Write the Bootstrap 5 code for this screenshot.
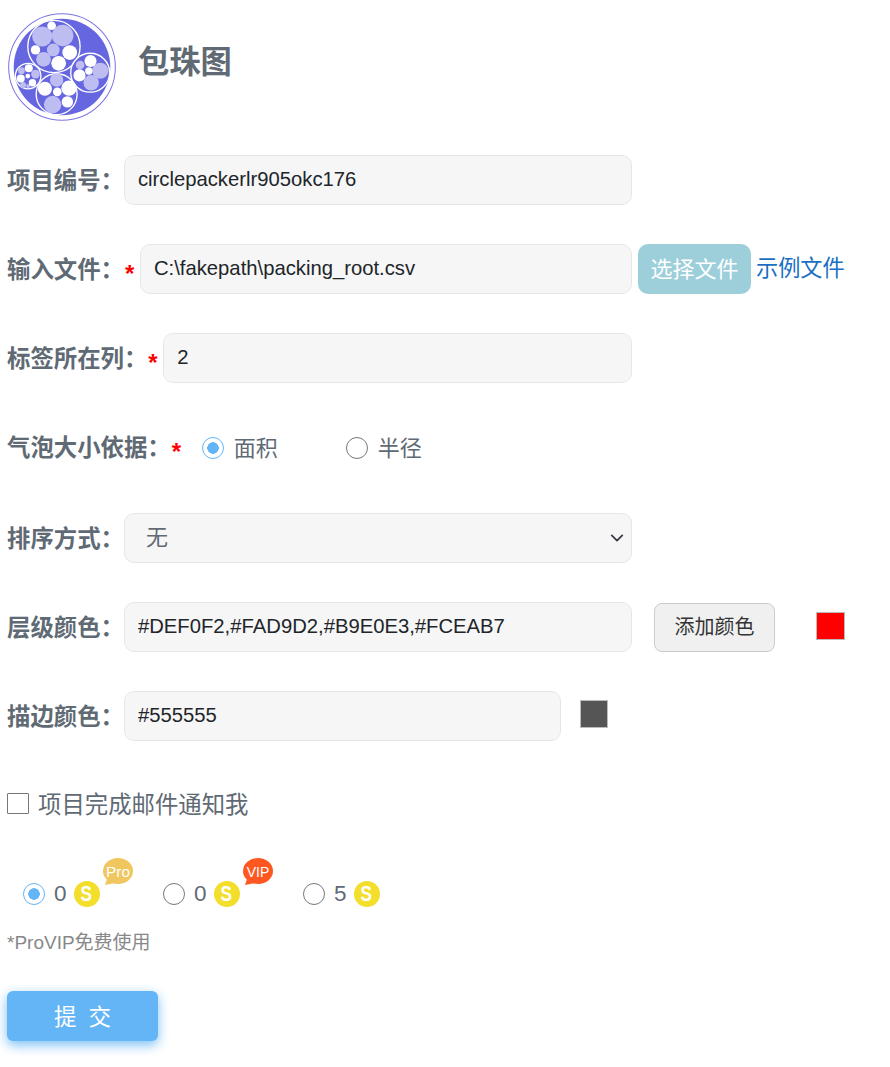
<!DOCTYPE html>
<html lang="zh">
<head>
    <meta charset="UTF-8">
    <title>包珠图</title>
    <link href="https://cdn.jsdelivr.net/npm/bootstrap@5.3.0/dist/css/bootstrap.min.css" rel="stylesheet">
    <style>
        body {
            font-family: "Liberation Sans", "Noto Sans CJK SC", sans-serif;
            background: #fff;
            color: #606a74;
            font-size: 20px;
        }
        .page-wrap { padding: 13px 0 26px 7px; }
        .title-row { height: 108px; margin-bottom: 34px; }
        .logo-box { margin-left: 1px; width: 108px; height: 108px; }
        .page-title { font-size: 31.3px; font-weight: 700; color: #606a74; margin: -8px 0 0 22px; }
        .form-line { height: 50px; margin-bottom: 39px; }
        .form-line.radio-line { margin-bottom: 41px; }
        .main-part { width: 625px; flex: none; }
        .short-part { width: 554px; flex: none; }
        .field-label { font-size: 23.4px; font-weight: 700; color: #606a74; white-space: nowrap; margin: 0; padding-top: 3px; }
        .req-star { color: #f00; font-size: 24px; font-weight: 700; margin-left: 1px; width: 15px; flex: none; line-height: 1; padding-top: 10px; }
        .form-control.soft-input, .form-select.soft-input {
            height: 50px;
            background-color: #f6f6f6;
            border: 1px solid #e6e6e6;
            border-radius: 10px;
            font-size: 20.25px;
            color: #212529;
            padding: 0 13px 1px;
            flex: 1;
            min-width: 0;
            width: auto;
        }
        .form-select.soft-input { color: #606a74; font-size: 22px; padding-left: 21px; background-position: right 5px center; background-size: 18px 14px; }
        .pick-btn {
            width: 113px; height: 50px; margin-left: 6px; padding: 0;
            background: #9dcfdb; border: 0; border-radius: 10px; color: #fff; font-size: 22px;
        }
        .sample-link { color: #1a6fc4; font-size: 22.2px; margin-left: 5px; text-decoration: none; white-space: nowrap; }
        .add-btn {
            width: 121px; height: 49px; margin-left: 22px; padding: 0;
            background: #f0f0f0; border: 1px solid #ccc; border-radius: 8px; color: #333; font-size: 20px;
        }
        .swatch { height: 28px; border: 1px solid #bbb; flex: none; }
        .swatch-red { width: 29px; background: #f00; margin-left: 41px; margin-top: -2px; }
        .swatch-gray { width: 28px; background: #555; margin-left: 19px; margin-top: -4px; }
        .form-check-input.dot-radio {
            width: 22px; height: 22px; margin: 0; flex: none;
            background-color: #fff; border: 1px solid #777;
            background-image: none;
        }
        .form-check-input.dot-radio:checked {
            border-color: #64b5f6;
            background-color: #fff;
            background-image: radial-gradient(circle, #64b5f6 0 5.5px, transparent 6px);
        }
        .radio-text { font-size: 22px; color: #606a74; margin-left: 10px; }
        .size-opts { margin-left: 15px; padding-top: 2px; }
        .size-opts .radio-text { width: 112px; }
        .mail-line { height: 50px; margin-bottom: 39px; margin-top: -1px; }
        .mail-line .radio-text { font-size: 23.4px; margin-left: 9px; padding-top: 4px; }
        .form-check-input.mail-check {
            width: 22px; height: 21px; margin: -1px 0 0; border: 1px solid #777; border-radius: 1px;
        }
        .plan-line { margin-left: 16px; height: 44px; padding-top: 8px; }
        .plan-item { width: 140px; position: relative; }
        .plan-num { font-size: 22.5px; color: #606a74; margin-left: 9px; margin-right: 7px; }
        .coin {
            width: 26px; height: 26px; border-radius: 50%; background: #f3de2c; color: #fff;
            font-weight: 700; font-size: 22px; line-height: 26px; text-align: center; display: block;
        }
        .coin-s { display: inline-block; transform: scaleX(.78); }
        .tag-bubble {
            position: absolute; left: 80px; top: -19px; width: 30px; height: 27px;
        }
        .pay-note { font-size: 19px; color: #888; margin: 17px 0 0 0; line-height: 28px; }
        .submit-btn {
            width: 151px; height: 50px; margin-top: 34px; padding: 3px 0 0;
            background: #64b5f6; border: 0; border-radius: 6px; color: #fff;
            font-size: 22.5px; letter-spacing: 12px; text-indent: 12px;
            box-shadow: 0 4px 12px rgba(100, 181, 246, .85);
        }
    </style>
</head>
<body>
    <div class="page-wrap">
        <div class="d-flex align-items-center title-row">
            <div class="logo-box">
                <svg width="108" height="108" viewBox="25 40 322 322">
                    <circle cx="186" cy="201" r="159" fill="#fff" stroke="#7a74e6" stroke-width="3"/>
                    <circle cx="186" cy="201" r="144" fill="#6666e0"/>
                    <g fill="#6666e0" stroke="#fff" stroke-width="4">
                        <circle cx="162" cy="140" r="78"/>
                        <circle cx="270" cy="218" r="58"/>
                        <circle cx="170" cy="282" r="61"/>
                        <circle cx="85" cy="228" r="38"/>
                    </g>
                    <g fill="#bdbdf2">
                        <circle cx="127" cy="110" r="30"/>
                        <circle cx="188" cy="107" r="32"/>
                        <circle cx="160" cy="150" r="19"/>
                        <circle cx="131" cy="178" r="22"/>
                        <circle cx="240" cy="195" r="13"/>
                        <circle cx="300" cy="212" r="24"/>
                        <circle cx="273" cy="248" r="23"/>
                        <circle cx="170" cy="240" r="20"/>
                        <circle cx="158" cy="313" r="26"/>
                        <circle cx="65" cy="212" r="10"/>
                        <circle cx="107" cy="222" r="13"/>
                        <circle cx="70" cy="255" r="9"/>
                        <circle cx="85" cy="258" r="6"/>
                    </g>
                    <g fill="#fff">
                        <circle cx="155" cy="78" r="13"/>
                        <circle cx="107" cy="150" r="14"/>
                        <circle cx="209" cy="158" r="22"/>
                        <circle cx="176" cy="190" r="22"/>
                        <circle cx="271" cy="183" r="18"/>
                        <circle cx="266" cy="213" r="11"/>
                        <circle cx="238" cy="226" r="18"/>
                        <circle cx="135" cy="266" r="21"/>
                        <circle cx="207" cy="264" r="23"/>
                        <circle cx="172" cy="275" r="13"/>
                        <circle cx="202" cy="305" r="17"/>
                        <circle cx="87" cy="205" r="12"/>
                        <circle cx="84" cy="228" r="7"/>
                        <circle cx="63" cy="235" r="12"/>
                        <circle cx="98" cy="248" r="11"/>
                    </g>
                </svg>
            </div>
            <h1 class="page-title">包珠图</h1>
        </div>

        <form>
            <div class="d-flex align-items-center form-line">
                <div class="d-flex align-items-center main-part">
                    <label class="field-label">项目编号：</label>
                    <input class="form-control soft-input" value="circlepackerlr905okc176">
                </div>
            </div>

            <div class="d-flex align-items-center form-line">
                <div class="d-flex align-items-center main-part">
                    <label class="field-label">输入文件：</label>
                    <span class="req-star">*</span>
                    <input class="form-control soft-input" value="C:\fakepath\packing_root.csv">
                </div>
                <button type="button" class="btn pick-btn">选择文件</button>
                <a href="#" class="sample-link">示例文件</a>
            </div>

            <div class="d-flex align-items-center form-line">
                <div class="d-flex align-items-center main-part">
                    <label class="field-label">标签所在列：</label>
                    <span class="req-star">*</span>
                    <input class="form-control soft-input" value="2">
                </div>
            </div>

            <div class="d-flex align-items-center form-line radio-line">
                <label class="field-label">气泡大小依据：</label>
                <span class="req-star">*</span>
                <div class="d-flex align-items-center size-opts">
                    <input class="form-check-input dot-radio" type="radio" name="sizeby" checked>
                    <span class="radio-text">面积</span>
                    <input class="form-check-input dot-radio" type="radio" name="sizeby">
                    <span class="radio-text">半径</span>
                </div>
            </div>

            <div class="d-flex align-items-center form-line">
                <div class="d-flex align-items-center main-part">
                    <label class="field-label">排序方式：</label>
                    <select class="form-select soft-input"><option>无</option></select>
                </div>
            </div>

            <div class="d-flex align-items-center form-line">
                <div class="d-flex align-items-center main-part">
                    <label class="field-label">层级颜色：</label>
                    <input class="form-control soft-input" value="#DEF0F2,#FAD9D2,#B9E0E3,#FCEAB7">
                </div>
                <button type="button" class="btn add-btn">添加颜色</button>
                <span class="swatch swatch-red"></span>
            </div>

            <div class="d-flex align-items-center form-line">
                <div class="d-flex align-items-center short-part">
                    <label class="field-label">描边颜色：</label>
                    <input class="form-control soft-input" value="#555555">
                </div>
                <span class="swatch swatch-gray"></span>
            </div>

            <div class="d-flex align-items-center mail-line">
                <input class="form-check-input mail-check" type="checkbox">
                <span class="radio-text">项目完成邮件通知我</span>
            </div>

            <div class="d-flex align-items-center plan-line">
                <div class="d-flex align-items-center plan-item">
                    <input class="form-check-input dot-radio" type="radio" name="plan" checked>
                    <span class="plan-num">0</span>
                    <span class="coin"><span class="coin-s">S</span></span>
                    <svg class="tag-bubble" viewBox="0 0 30 27"><ellipse cx="15" cy="13" rx="15" ry="13" fill="#f0c75e"/><path d="M5 18 L2 27 L12 25 Z" fill="#f0c75e"/><text x="15" y="18.5" text-anchor="middle" fill="#fff" font-size="15.4">Pro</text></svg>
                </div>
                <div class="d-flex align-items-center plan-item">
                    <input class="form-check-input dot-radio" type="radio" name="plan">
                    <span class="plan-num">0</span>
                    <span class="coin"><span class="coin-s">S</span></span>
                    <svg class="tag-bubble" viewBox="0 0 30 27"><ellipse cx="15" cy="13" rx="15" ry="13" fill="#ff5722"/><path d="M5 18 L2 27 L12 25 Z" fill="#ff5722"/><text x="15" y="18.5" text-anchor="middle" fill="#fff" font-size="14">VIP</text></svg>
                </div>
                <div class="d-flex align-items-center plan-item">
                    <input class="form-check-input dot-radio" type="radio" name="plan">
                    <span class="plan-num">5</span>
                    <span class="coin"><span class="coin-s">S</span></span>
                </div>
            </div>
            <p class="pay-note">*ProVIP免费使用</p>
            <button type="button" class="btn submit-btn">提交</button>
        </form>
    </div>
    <script src="https://cdn.jsdelivr.net/npm/bootstrap@5.3.0/dist/js/bootstrap.bundle.min.js"></script>
</body>
</html>
